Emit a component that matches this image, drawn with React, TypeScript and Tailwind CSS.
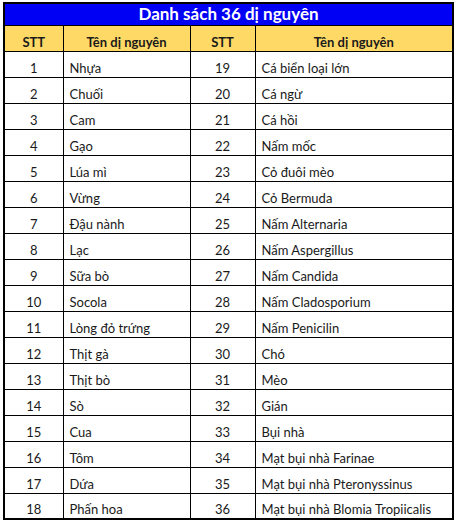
const left = [
  "Nhựa",
  "Chuối",
  "Cam",
  "Gạo",
  "Lúa mì",
  "Vừng",
  "Đậu nành",
  "Lạc",
  "Sữa bò",
  "Socola",
  "Lòng đỏ trứng",
  "Thịt gà",
  "Thịt bò",
  "Sò",
  "Cua",
  "Tôm",
  "Dứa",
  "Phấn hoa",
];

const right = [
  "Cá biển loại lớn",
  "Cá ngừ",
  "Cá hồi",
  "Nấm mốc",
  "Cỏ đuôi mèo",
  "Cỏ Bermuda",
  "Nấm Alternaria",
  "Nấm Aspergillus",
  "Nấm Candida",
  "Nấm Cladosporium",
  "Nấm Penicilin",
  "Chó",
  "Mèo",
  "Gián",
  "Bụi nhà",
  "Mạt bụi nhà Farinae",
  "Mạt bụi nhà Pteronyssinus",
  "Mạt bụi nhà Blomia Tropiicalis",
];

export default function App() {
  return (
    <div className="w-[457px] h-[525px] bg-white pt-[2px] pl-[3px] font-['Lato','Noto_Sans',sans-serif] text-[13px] leading-[14px] text-[#1a1a1a]">
      <table className="border-collapse table-fixed w-[449px] border-2 border-black">
        <colgroup>
          <col className="w-[59px]" />
          <col className="w-[127px]" />
          <col className="w-[65px]" />
          <col className="w-[198px]" />
        </colgroup>
        <thead>
          <tr className="h-[22px] bg-[#0000f5]">
            <th colSpan={4} className="text-white text-[17px] font-bold text-center leading-none pb-[1px]">
              Danh sách 36 dị nguyên
            </th>
          </tr>
          <tr className="h-[26px] bg-[#ffd966]">
            <th className="border border-black font-bold align-bottom pb-[2px]">STT</th>
            <th className="border border-black font-bold align-bottom pb-[2px]">Tên dị nguyên</th>
            <th className="border border-black font-bold align-bottom pb-[2px]">STT</th>
            <th className="border border-black font-bold align-bottom pb-[2px]">Tên dị nguyên</th>
          </tr>
        </thead>
        <tbody>
          {left.map((name, i) => (
            <tr key={i} className="h-[26px]">
              <td className="border border-black text-center align-bottom pb-[2px]">{i + 1}</td>
              <td className="border border-black pl-[6px] align-bottom pb-[2px] whitespace-nowrap">{name}</td>
              <td className="border border-black text-center align-bottom pb-[2px]">{i + 19}</td>
              <td className="border border-black pl-[6px] align-bottom pb-[2px] whitespace-nowrap">{right[i]}</td>
            </tr>
          ))}
        </tbody>
      </table>
    </div>
  );
}
